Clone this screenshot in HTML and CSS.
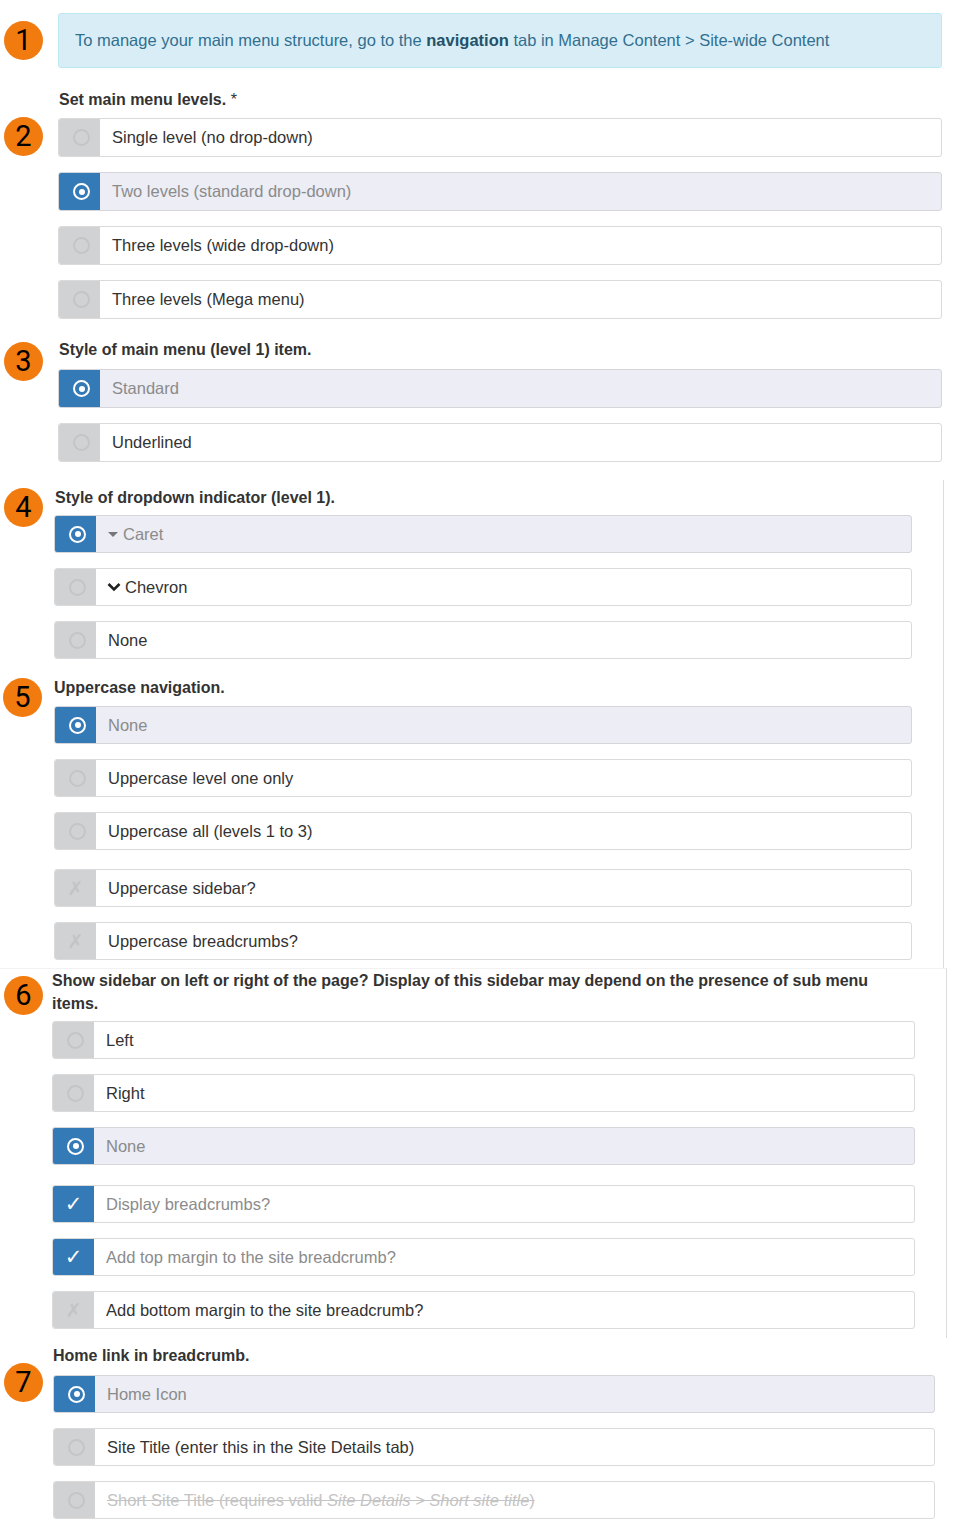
FILE: index.html
```html
<!DOCTYPE html>
<html lang="en">
<head>
    <meta charset="UTF-8">
    <meta name="viewport" content="width=device-width, initial-scale=1.0">
    <title>Navigation Settings</title>
    <link rel="stylesheet" href="styles.css">
</head>
<body>
<div class="page">

    <!-- 1: info note -->
    <section class="step step-1">
        <span class="badge">1</span>
        <div class="alert"><p>To manage your main menu structure, go to the <b>navigation</b> tab in Manage Content &gt; Site-wide Content</p></div>
    </section>

    <!-- 2: menu levels -->
    <section class="step step-2">
        <span class="badge">2</span>
        <div class="field-label">Set main menu levels. <span class="req">*</span></div>
        <div class="options">
            <div class="opt"><span class="addon"><span class="radio"></span></span><span class="opt-text">Single level (no drop-down)</span></div>
            <div class="opt is-on"><span class="addon"><span class="radio"></span></span><span class="opt-text">Two levels (standard drop-down)</span></div>
            <div class="opt"><span class="addon"><span class="radio"></span></span><span class="opt-text">Three levels (wide drop-down)</span></div>
            <div class="opt"><span class="addon"><span class="radio"></span></span><span class="opt-text">Three levels (Mega menu)</span></div>
        </div>
    </section>

    <!-- 3: item style -->
    <section class="step step-3">
        <span class="badge">3</span>
        <div class="field-label">Style of main menu (level 1) item.</div>
        <div class="options">
            <div class="opt is-on"><span class="addon"><span class="radio"></span></span><span class="opt-text">Standard</span></div>
            <div class="opt"><span class="addon"><span class="radio"></span></span><span class="opt-text">Underlined</span></div>
        </div>
    </section>

    <div class="panel panel-a">
        <!-- 4: dropdown indicator -->
        <section class="step step-4">
            <span class="badge">4</span>
            <div class="field-label">Style of dropdown indicator (level 1).</div>
            <div class="options">
                <div class="opt is-on"><span class="addon"><span class="radio"></span></span><span class="opt-text"><span class="caret"></span>Caret</span></div>
                <div class="opt"><span class="addon"><span class="radio"></span></span><span class="opt-text">
                    <svg class="chevron" width="14" height="10" viewBox="0 0 14 10"><polyline points="1.5,2 7,7.5 12.5,2" fill="none" stroke="#222" stroke-width="2.6"/></svg>Chevron</span></div>
                <div class="opt"><span class="addon"><span class="radio"></span></span><span class="opt-text">None</span></div>
            </div>
        </section>

        <!-- 5: uppercase -->
        <section class="step step-5">
            <span class="badge">5</span>
            <div class="field-label">Uppercase navigation.</div>
            <div class="options">
                <div class="opt is-on"><span class="addon"><span class="radio"></span></span><span class="opt-text">None</span></div>
                <div class="opt"><span class="addon"><span class="radio"></span></span><span class="opt-text">Uppercase level one only</span></div>
                <div class="opt"><span class="addon"><span class="radio"></span></span><span class="opt-text">Uppercase all (levels 1 to 3)</span></div>
            </div>
            <div class="options checks">
                <div class="opt"><span class="addon"><span class="cross">&#x2717;</span></span><span class="opt-text">Uppercase sidebar?</span></div>
                <div class="opt"><span class="addon"><span class="cross">&#x2717;</span></span><span class="opt-text">Uppercase breadcrumbs?</span></div>
            </div>
        </section>
    </div>

    <div class="panel panel-b">
        <!-- 6: sidebar + breadcrumbs -->
        <section class="step step-6">
            <span class="badge">6</span>
            <div class="field-label">Show sidebar on left or right of the page? Display of this sidebar may depend on the presence of sub menu items.</div>
            <div class="options">
                <div class="opt"><span class="addon"><span class="radio"></span></span><span class="opt-text">Left</span></div>
                <div class="opt"><span class="addon"><span class="radio"></span></span><span class="opt-text">Right</span></div>
                <div class="opt is-on"><span class="addon"><span class="radio"></span></span><span class="opt-text">None</span></div>
            </div>
            <div class="options checks">
                <div class="opt is-checked"><span class="addon"><span class="tick">&#x2713;</span></span><span class="opt-text">Display breadcrumbs?</span></div>
                <div class="opt is-checked"><span class="addon"><span class="tick">&#x2713;</span></span><span class="opt-text">Add top margin to the site breadcrumb?</span></div>
                <div class="opt"><span class="addon"><span class="cross">&#x2717;</span></span><span class="opt-text">Add bottom margin to the site breadcrumb?</span></div>
            </div>
        </section>
    </div>

    <!-- 7: home link -->
    <section class="step step-7">
        <span class="badge">7</span>
        <div class="field-label">Home link in breadcrumb.</div>
        <div class="options">
            <div class="opt is-on"><span class="addon"><span class="radio"></span></span><span class="opt-text">Home Icon</span></div>
            <div class="opt"><span class="addon"><span class="radio"></span></span><span class="opt-text">Site Title (enter this in the Site Details tab)</span></div>
            <div class="opt is-disabled"><span class="addon"><span class="radio"></span></span><span class="opt-text"><span>Short Site Title (requires valid <i>Site Details &gt; Short site title</i>)</span></span></div>
        </div>
    </section>

</div>
</body>
</html>
```

FILE: styles.css
```css
body {
    margin: 0;
    background: #fff;
    font-family: "Liberation Sans", Arial, sans-serif;
    font-size: 16px;
    color: #333;
}
.page {
    padding-top: 13px;
    width: 960px;
}
.step {
    position: relative;
}

/* orange step numbers */
.badge {
    position: absolute;
    left: 4px;
    width: 39px;
    height: 39px;
    border-radius: 50%;
    background: #f27b10;
    color: #000;
    font-family: Roboto, "Liberation Sans", sans-serif;
    font-size: 29px;
    line-height: 39px;
    text-align: center;
}

.alert {
    box-sizing: border-box;
    height: 55px;
    display: flex;
    align-items: center;
    padding: 0 16px;
    background: #d9edf7;
    border: 1px solid #bce8f1;
    border-radius: 3px;
    color: #31708f;
    font-size: 16.5px;
}
.alert p {
    margin: 0;
}
.alert b {
    color: #245269;
}

.field-label {
    font-weight: bold;
    line-height: 20px;
}
.req {
    font-weight: normal;
}

.options {
    display: flex;
    flex-direction: column;
    gap: 15px;
}
.opt {
    box-sizing: border-box;
    display: flex;
    height: 38px;
    background: #fff;
    border: 1px solid #dadada;
    border-radius: 3px;
    overflow: hidden;
}
.addon {
    flex: 0 0 41px;
    display: flex;
    align-items: center;
    justify-content: center;
    background: #d1d2d4;
}
.radio {
    box-sizing: border-box;
    width: 17px;
    height: 17px;
    margin-left: 4px;
    border-radius: 50%;
    border: 2px solid #c4c5c7;
}
.opt-text {
    display: flex;
    align-items: center;
    padding-left: 12px;
    white-space: nowrap;
    font-size: 16.5px;
}
.opt.is-on {
    background: #ecedf5;
    border-color: #d6d6da;
}
.opt.is-on .addon,
.opt.is-checked .addon {
    background: #337ab7;
}
.opt.is-on .opt-text,
.opt.is-checked .opt-text {
    color: #8b8b8b;
}
.opt.is-on .radio {
    border: 2.5px solid #fff;
    display: flex;
    align-items: center;
    justify-content: center;
}
.opt.is-on .radio::after {
    content: "";
    width: 6px;
    height: 6px;
    border-radius: 50%;
    background: #fff;
}
.tick {
    color: #fff;
    font-family: "DejaVu Sans", sans-serif;
    font-size: 21px;
    line-height: 1;
}
.cross {
    color: #c3c4c6;
    font-family: "DejaVu Sans", sans-serif;
    font-size: 19px;
    line-height: 1;
}
.opt.is-disabled .opt-text {
    color: #c4c4c4;
    text-decoration: line-through;
}
.caret {
    width: 0;
    height: 0;
    border-left: 5px solid transparent;
    border-right: 5px solid transparent;
    border-top: 5px solid #777;
    margin-right: 5px;
}
.chevron {
    margin-right: 4px;
    margin-left: -1px;
}

/* section placement */
.step-1 .badge { top: 8px; }
.step-1 .alert { margin-left: 58px; width: 884px; }

.step-2 { margin-top: 22px; }
.step-2 .badge { top: 27px; }
.step-2 .field-label,
.step-2 .options,
.step-3 .field-label,
.step-3 .options {
    margin-left: 58px;
    width: 884px;
}
.step-2 .field-label { padding-left: 1px; margin-bottom: 8px; }
.step-2 .opt,
.step-3 .opt { height: 39px; }

.step-3 { margin-top: 21px; }
.step-3 .badge { top: 2px; }
.step-3 .field-label { padding-left: 1px; margin-bottom: 9px; }

.panel-a {
    margin-top: 18px;
    width: 943px;
    padding: 8px 0 8px;
    border-right: 1px solid #dddddd;
}
.step-4 .field-label,
.step-4 .options,
.step-5 .field-label,
.step-5 .options {
    margin-left: 54px;
    width: 858px;
}
.step-4 .badge { top: 0; }
.step-4 .field-label { padding-left: 1px; margin-bottom: 7px; }
.step-5 { margin-top: 19px; }
.step-5 .badge { top: 0; left: 3px; }
.step-5 .field-label { margin-bottom: 8px; }
.options.checks { margin-top: 19px; }

.panel-b {
    width: 946px;
    padding-bottom: 9px;
    border-top: 1px solid #f2f2f2;
    border-right: 1px solid #dddddd;
}
.step-6 .field-label,
.step-6 .options {
    margin-left: 52px;
    width: 863px;
}
.step-6 .field-label {
    line-height: 23px;
    margin-bottom: 6px;
}
.step-6 .badge { top: 7px; }
.step-6 .options.checks { margin-top: 20px; }

.step-7 { margin-top: 8px; }
.step-7 .field-label,
.step-7 .options {
    margin-left: 53px;
    width: 882px;
}
.step-7 .field-label { margin-bottom: 9px; }
.step-7 .badge { top: 17px; }
```
